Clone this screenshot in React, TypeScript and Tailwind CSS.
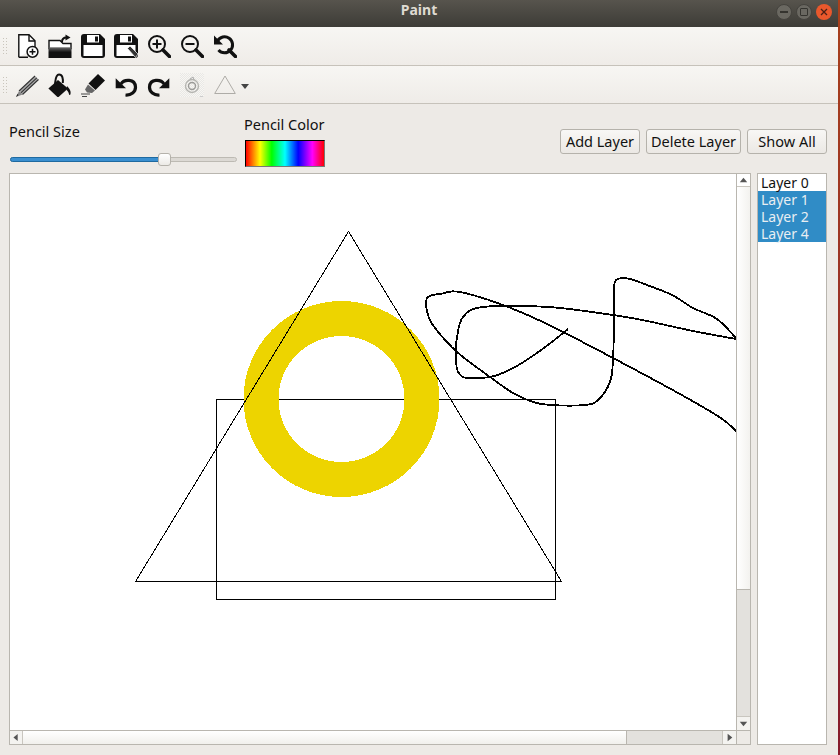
import React from "react";

function Grip() {
  return (
    <div className="ml-[3px] mr-[8px] grid w-[4px] grid-cols-2 gap-x-[2px] gap-y-[2px]">
      {Array.from({ length: 12 }).map((_, i) => (
        <span key={i} className="h-px w-px bg-[#c9c5bc]" />
      ))}
    </div>
  );
}

const Icon = ({ children }: { children: React.ReactNode }) => (
  <svg viewBox="0 0 24 24" className="h-6 w-6 shrink-0">
    {children}
  </svg>
);

const NewFile = () => (
  <Icon>
    <path d="M3.800 23.200V.8H14l6 6v7" fill="#fff" stroke="#111" strokeWidth="1.400" />
    <path d="M3.800 23.200H13M14 1v6h6" fill="none" stroke="#111" strokeWidth="1.400" />
    <circle cx="17.500" cy="17.800" r="5.400" fill="#fff" stroke="#111" strokeWidth="1.500" />
    <path d="M17.500 14.800v6M14.500 17.800h6" stroke="#111" strokeWidth="1.500" />
  </Icon>
);

const OpenFile = () => (
  <Icon>
    <defs>
      <linearGradient id="openband" x1="0" y1="0" x2="0" y2="1">
        <stop offset="0" stopColor="#666" />
        <stop offset="0.45" stopColor="#111" />
        <stop offset="1" stopColor="#111" />
      </linearGradient>
    </defs>
    <path d="M1 6.500h11l3 3h8v5H1z" fill="#fff" stroke="#111" strokeWidth="1.400" />
    <rect x="0.500" y="13.500" width="23" height="10.500" fill="url(#openband)" />
    <path d="M14 8c0-3 2-4.500 4.500-4.500" fill="none" stroke="#111" strokeWidth="2" />
    <path d="M17.500.5l5 3-5 3z" fill="#111" />
  </Icon>
);

const Save = () => (
  <Icon>
    <path d="M3 0h16l5 5v16a3 3 0 0 1-3 3H3a3 3 0 0 1-3-3V3a3 3 0 0 1 3-3z" fill="#111" />
    <path d="M6 1h12v7.500H6z" fill="#fff" />
    <path d="M14 2.500h3v5h-3z" fill="#111" />
    <path d="M2.500 11h19v11h-19z" fill="#fff" />
  </Icon>
);

const SaveAs = () => (
  <Icon>
    <path d="M3 0h16l5 5v16a3 3 0 0 1-3 3H3a3 3 0 0 1-3-3V3a3 3 0 0 1 3-3z" fill="#111" />
    <path d="M6 1h12v7.500H6z" fill="#fff" />
    <path d="M14 2.500h3v5h-3z" fill="#111" />
    <path d="M2.500 11h19v11h-19z" fill="#fff" />
    <path d="M13.500 14.500l2.500-2.500 8 8-2.500 3.500z" fill="#333" stroke="#fff" strokeWidth="0.700" />
  </Icon>
);

const Magnifier = ({ sign }: { sign: "plus" | "minus" }) => (
  <Icon>
    <circle cx="10" cy="10" r="8" fill="none" stroke="#111" strokeWidth="2" />
    <path d="M16 16l6.500 6.500" stroke="#111" strokeWidth="3.600" strokeLinecap="round" />
    <path d={sign === "plus" ? "M10 5.500v9M5.500 10h9" : "M5.500 10h9"} stroke="#111" strokeWidth="2" />
  </Icon>
);

const ZoomReset = () => (
  <Icon>
    <path d="M4.500 7A8 8 0 1 1 5.500 16" fill="none" stroke="#111" strokeWidth="3" />
    <path d="M1 1.500v9h9z" fill="#111" />
    <path d="M16 16l6.500 6.500" stroke="#111" strokeWidth="3.600" strokeLinecap="round" />
  </Icon>
);

const Pencil = () => (
  <Icon>
    <path d="M4 18L20 3l3.500 3.500L7.500 21.500z" fill="#aaa" />
    <path d="M4 18L20 3M5.800 19.800L21.800 4.800M7.500 21.500L23.500 6.500" stroke="#333" strokeWidth="1.100" />
    <path d="M4 18l3.500 3.500L1 24z" fill="#888" />
    <path d="M2.500 21l1 1L1 24z" fill="#111" />
  </Icon>
);

const Bucket = () => (
  <Icon>
    <path d="M.4 15.500L10 7l10 8.500-10 9z" fill="#111" />
    <path d="M7 11c.5-4 .5-9.500 4-9.500 3.500 0 4.200 4 3.800 8.500" fill="none" stroke="#111" strokeWidth="2" />
    <path d="M19 13c2 2 3 3.500 3.500 5.500.4 2-.2 4-1 3.500-.7-.5-.5-3-3-5" fill="#111" />
  </Icon>
);

const Eraser = () => (
  <Icon>
    <path d="M17 1l7 6.500-9.500 9.500-7-6.500z" fill="#111" />
    <path d="M7 11.500l7 6-3 2.500-5-.5-2-3z" fill="#666" />
    <path d="M0 21h9M1 23.500h5" stroke="#444" strokeWidth="1" />
  </Icon>
);

const Undo = () => (
  <Icon>
    <path d="M7 11C10 6 21 5.500 21.500 14c.2 5-4.500 8.500-10 8" fill="none" stroke="#111" strokeWidth="3.200" />
    <path d="M1.700 5.300v10h10.300z" fill="#111" />
  </Icon>
);

const Redo = () => (
  <Icon>
    <path d="M17 11C14 6 3 5.500 2.500 14c-.2 5 4.500 8.500 10 8" fill="none" stroke="#111" strokeWidth="3.200" />
    <path d="M22.300 5.300v10H12z" fill="#111" />
  </Icon>
);

const Spiral = () => (
  <Icon>
    <defs>
      <pattern id="checks" width="2" height="2" patternUnits="userSpaceOnUse">
        <rect width="2" height="2" fill="#f7f6f3" />
        <rect width="1" height="1" fill="#e9e8e5" />
        <rect x="1" y="1" width="1" height="1" fill="#e9e8e5" />
      </pattern>
    </defs>
    <rect x="0" y="0" width="24" height="24" fill="url(#checks)" />
    <circle cx="12" cy="13" r="6.500" fill="none" stroke="#b5b5b1" strokeWidth="1.400" />
    <circle cx="12" cy="13" r="3.500" fill="none" stroke="#9b9b98" strokeWidth="1.400" />
    <path d="M10 6l3-2 1 2.500" fill="none" stroke="#aaa" strokeWidth="1" />
    <path d="M20 23.500h3" stroke="#ccc" strokeWidth="1" />
  </Icon>
);

const Triangle = () => (
  <Icon>
    <path d="M1.700 20.500L12 3l10.300 17.500z" fill="none" stroke="#aeaca7" strokeWidth="1" />
  </Icon>
);

const rainbow = {
  backgroundImage:
    "linear-gradient(to right,#f00,#ff0 18%,#0f0 33%,#0ff 50%,#00f 67%,#f0f 85%,#f00)",
};

function Arrow({ d }: { d: string }) {
  return (
    <svg viewBox="0 0 14 14" className="h-[13px] w-[13px]">
      <path d={d} fill="#555" />
    </svg>
  );
}

function smooth(pts: number[][]) {
  let d = `M${pts[0][0]} ${pts[0][1]}`;
  for (let i = 0; i < pts.length - 1; i++) {
    const p0 = pts[Math.max(i - 1, 0)];
    const p1 = pts[i];
    const p2 = pts[i + 1];
    const p3 = pts[Math.min(i + 2, pts.length - 1)];
    const c1x = p1[0] + (p2[0] - p0[0]) / 6;
    const c1y = p1[1] + (p2[1] - p0[1]) / 6;
    const c2x = p2[0] - (p3[0] - p1[0]) / 6;
    const c2y = p2[1] - (p3[1] - p1[1]) / 6;
    d += `C${c1x} ${c1y} ${c2x} ${c2y} ${p2[0]} ${p2[1]}`;
  }
  return d;
}

const strokeOne = [
  [568, 329], [563, 333], [548, 345], [522, 363], [505, 372], [490, 377], [473, 378], [463, 377],
  [457, 369], [456, 350], [457, 337], [463, 317], [483, 307], [548, 307], [613, 315], [647, 321],
  [693, 331], [736, 339],
];

const strokeTwo = [
  [736, 431], [713, 413], [630, 367], [532, 317], [465, 293], [440, 294], [427, 298], [428, 315],
  [435, 328], [457, 352], [490, 377], [513, 393], [533, 402], [550, 405], [585, 405], [598, 400],
  [610, 382], [613, 360], [614, 320], [614, 287], [618, 279], [630, 279], [647, 285], [672, 295],
  [693, 308], [717, 319], [736, 338],
];

function Drawing() {
  return (
    <svg viewBox="0 0 726 556" className="block h-full w-full" shapeRendering="crispEdges">
      <g transform="translate(-10 -174)">
        <rect x="216.500" y="399.500" width="339" height="200" fill="none" stroke="#000" strokeWidth="1" />
        <path
          fillRule="evenodd"
          fill="#edd400"
          d="M243.500 399a98 98 0 1 0 196 0a98 98 0 1 0-196 0ZM278.500 399a63 63 0 1 1 126 0a63 63 0 1 1-126 0Z"
        />
        <path d="M348.500 231.500L135.500 581.500H561.500Z" fill="none" stroke="#000" strokeWidth="1" />
        <path d={smooth(strokeOne)} fill="none" stroke="#000" strokeWidth="1.800" />
        <path d={smooth(strokeTwo)} fill="none" stroke="#000" strokeWidth="1.800" />
      </g>
    </svg>
  );
}

export default function App() {
  return (
    <div className="flex h-[755px] w-[840px] overflow-hidden font-['Noto_Sans',sans-serif] text-[14.500px] text-[#111]">
      <div className="flex w-[838px] flex-col bg-[#edeae6]">
        {/* Title bar */}
        <div className="relative flex h-[27px] shrink-0 items-center justify-center bg-gradient-to-b from-[#57544d] to-[#3d3c37] pb-[8px]">
          <span className="text-[14px] font-bold text-[#dfdbd2]">Paint</span>
          <div className="absolute right-[6px] top-[4px] flex gap-[4px]">
            <span className="flex h-4 w-4 items-center justify-center rounded-full border border-[#45433e] bg-[#6a6861]">
              <span className="h-[1.500px] w-2 bg-[#35342f]" />
            </span>
            <span className="flex h-4 w-4 items-center justify-center rounded-full border border-[#45433e] bg-[#6a6861]">
              <span className="h-2 w-2 rounded-[1px] border border-[#35342f]" />
            </span>
            <span className="flex h-4 w-4 items-center justify-center rounded-full bg-[#e9582c]">
              <svg viewBox="0 0 8 8" className="h-2 w-2">
                <path d="M1 1l6 6M7 1L1 7" stroke="#4a2015" strokeWidth="1.300" />
              </svg>
            </span>
          </div>
        </div>

        {/* File toolbar */}
        <div className="flex h-[39px] shrink-0 items-center border-b border-[#c6c2ba] bg-gradient-to-b from-[#f7f6f3] to-[#efece8]">
          <Grip />
          <div className="flex gap-[9px]">
            <NewFile />
            <OpenFile />
            <Save />
            <SaveAs />
            <Magnifier sign="plus" />
            <Magnifier sign="minus" />
            <ZoomReset />
          </div>
        </div>

        {/* Tool toolbar */}
        <div className="flex h-[38px] shrink-0 items-center border-b border-[#c6c2ba] bg-gradient-to-b from-[#f7f6f3] to-[#efece8]">
          <Grip />
          <div className="flex items-center gap-[9px]">
            <Pencil />
            <Bucket />
            <Eraser />
            <Undo />
            <Redo />
            <Spiral />
            <div className="flex items-center">
              <Triangle />
              <svg viewBox="0 0 8 5" className="ml-[4px] mt-[4px] h-[5px] w-2">
                <path d="M0 0h8L4 5z" fill="#444" />
              </svg>
            </div>
          </div>
        </div>

        {/* Controls */}
        <div className="flex h-[69px] shrink-0 items-end pb-[6px]">
          <div className="ml-[9px] flex w-[228px] flex-col">
            <span className="leading-[18px]">Pencil Size</span>
            <div className="relative mb-[1px] mt-[13px] h-[13px]">
              <div className="absolute left-px right-0 top-[4px] h-[5px] rounded-full border border-[#bdbab3] bg-[#dcd9d4]" />
              <div className="absolute left-px top-[4px] h-[5px] w-[150px] rounded-l-full border border-[#1f6aa0] bg-[#3a8fd0]" />
              <div className="absolute left-[149px] top-0 h-[13px] w-[13px] rounded-[3px] border border-[#b5b2ab] bg-gradient-to-b from-white to-[#eceae6]" />
            </div>
          </div>
          <div className="ml-[8px] flex flex-col">
            <span className="-ml-px leading-[18px]">Pencil Color</span>
            <div
              className="mt-[7px] h-[27px] w-[80px] border border-b-[#777] border-l-black border-r-[#777] border-t-black"
              style={rainbow}
            />
          </div>
          <div className="mb-auto ml-auto mr-[11px] mt-[25px] flex gap-[6px]">
            <button className="h-[25px] w-[80px] rounded-[3px] border border-[#b5b2ab] bg-gradient-to-b from-[#f8f7f5] to-[#ebe8e4] leading-none">
              Add Layer
            </button>
            <button className="h-[25px] w-[95px] rounded-[3px] border border-[#b5b2ab] bg-gradient-to-b from-[#f8f7f5] to-[#ebe8e4] leading-none">
              Delete Layer
            </button>
            <button className="h-[25px] w-[80px] rounded-[3px] border border-[#b5b2ab] bg-gradient-to-b from-[#f8f7f5] to-[#ebe8e4] leading-none">
              Show All
            </button>
          </div>
        </div>

        {/* Canvas and layer list */}
        <div className="flex h-[572px] shrink-0 pl-[9px]">
          <div className="grid h-full w-[742px] grid-cols-[726px_14px] grid-rows-[556px_14px] border border-[#b9b6af]">
            <div className="overflow-hidden bg-white">
              <Drawing />
            </div>
            <div className="flex flex-col border-l border-[#b9b6af] bg-[#e3e1dd]">
              <div className="flex h-[13px] items-center justify-center border-b border-[#c9c6bf] bg-white">
                <Arrow d="M7 4l4 5H3z" />
              </div>
              <div className="h-[403px] border-b border-[#b9b6af] bg-gradient-to-r from-white to-[#f3f2ef]" />
              <div className="flex-1" />
              <div className="flex h-[14px] items-center justify-center border-t border-[#c9c6bf] bg-[#f4f3f0]">
                <Arrow d="M3 5h8l-4 5z" />
              </div>
            </div>
            <div className="flex border-t border-[#b9b6af] bg-[#e3e1dd]">
              <div className="flex w-[13px] items-center justify-center border-r border-[#c9c6bf] bg-[#f4f3f0]">
                <Arrow d="M9 3v8L4 7z" />
              </div>
              <div className="w-[604px] border-r border-[#b9b6af] bg-gradient-to-b from-white to-[#f1f0ec]" />
              <div className="flex-1" />
              <div className="flex w-[14px] items-center justify-center border-l border-[#c9c6bf] bg-[#f4f3f0]">
                <Arrow d="M5 3v8l5-4z" />
              </div>
            </div>
            <div className="border-l border-t border-[#b9b6af] bg-[#edeae6]" />
          </div>
          <div className="ml-[6px] h-full w-[70px] border border-[#b9b6af] bg-white text-[14px] leading-[17px]">
            <div className="pl-[3px] text-[#111]">Layer 0</div>
            <div className="bg-[#308cc6] pl-[3px] text-[#e8eef2]">Layer 1</div>
            <div className="bg-[#308cc6] pl-[3px] text-[#e8eef2]">Layer 2</div>
            <div className="bg-[#308cc6] pl-[3px] text-[#e8eef2]">Layer 4</div>
          </div>
        </div>
      </div>
      <div className="w-[2px] bg-gradient-to-b from-[#a8401c] to-[#861b2c]" />
    </div>
  );
}
